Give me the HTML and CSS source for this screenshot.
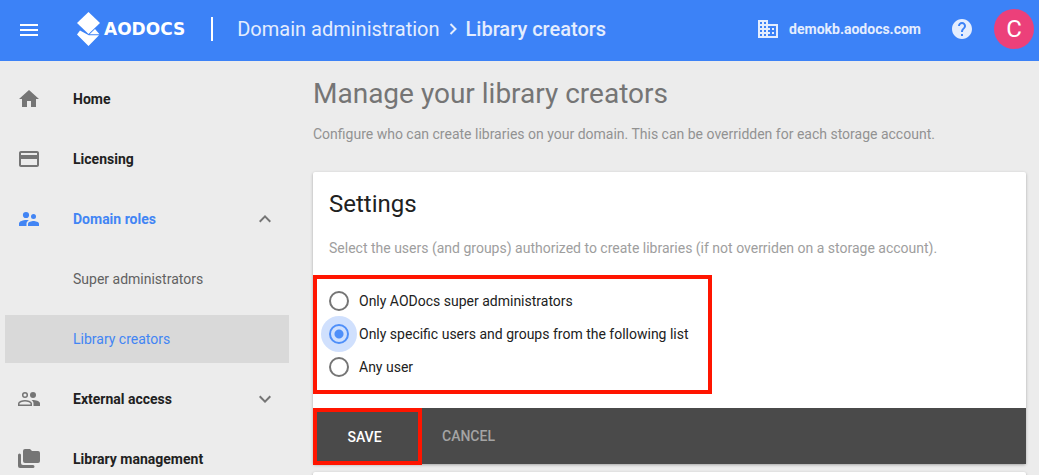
FILE: index.html
```html
<!DOCTYPE html>
<html lang="en">
<head>
<meta charset="utf-8">
<meta name="viewport" content="width=device-width, initial-scale=1">
<title>Library creators - Domain administration</title>
<link rel="stylesheet" href="styles.css">
</head>
<body>
<div class="app">
  <header class="topbar">
    <button class="icon-button menu" type="button" aria-label="Menu">
      <svg class="icon" viewBox="0 0 24 24"><path d="M3 18h18v-2H3v2zm0-5h18v-2H3v2zm0-7v2h18V6H3z"/></svg>
    </button>
    <a class="brand" href="#">
      <svg class="brand-mark" viewBox="0 0 23 34"><path d="M11.500 0L23 11 11.500 22 0 11z"/><path d="M3 18.500L0 22.500 11.500 34 22 23.300H11.800z"/><path d="M18 17L12.600 22.300H22.500z"/></svg>
      <span class="brand-name">AODOCS</span>
    </a>
    <nav class="breadcrumb" aria-label="Breadcrumb">
      <a class="crumb" href="#">Domain administration</a>
      <svg class="crumb-arrow" viewBox="0 0 8 12"><path d="M1.500 1l5 5-5 5"/></svg>
      <a class="crumb current" href="#">Library creators</a>
    </nav>
    <div class="account">
      <a class="domain" href="#">
        <svg class="icon" viewBox="0 0 24 24"><path d="M12 7V3H2v18h20V7H12zM6 19H4v-2h2v2zm0-4H4v-2h2v2zm0-4H4V9h2v2zm0-4H4V5h2v2zm4 12H8v-2h2v2zm0-4H8v-2h2v2zm0-4H8V9h2v2zm0-4H8V5h2v2zm10 12h-8v-2h2v-2h-2v-2h2v-2h-2V9h8v10zm-2-8h-2v2h2v-2zm0 4h-2v2h2v-2z"/></svg>
        <span>demokb.aodocs.com</span>
      </a>
      <button class="icon-button help" type="button" aria-label="Help">
        <svg class="icon" viewBox="0 0 24 24"><path d="M12 2C6.480 2 2 6.480 2 12s4.480 10 10 10 10-4.480 10-10S17.520 2 12 2zm1 17h-2v-2h2v2zm2.070-7.750l-.9.920C13.450 12.900 13 13.500 13 15h-2v-.5c0-1.100.450-2.100 1.170-2.830l1.240-1.260c.370-.360.590-.860.590-1.410 0-1.100-.9-2-2-2s-2 .9-2 2H8c0-2.210 1.790-4 4-4s4 1.790 4 4c0 .880-.360 1.680-.930 2.250z"/></svg>
      </button>
      <button class="avatar" type="button" aria-label="Account">C</button>
    </div>
  </header>

  <div class="body">
    <nav class="sidebar" aria-label="Administration">
      <a class="item" href="#">
        <svg class="icon" viewBox="0 0 24 24"><path d="M10 20v-6h4v6h5v-8h3L12 3 2 12h3v8z"/></svg>
        <span class="label">Home</span>
      </a>
      <a class="item" href="#">
        <svg class="icon" viewBox="0 0 24 24"><path d="M20 4H4c-1.110 0-1.990.890-1.990 2L2 18c0 1.110.890 2 2 2h16c1.110 0 2-.890 2-2V6c0-1.110-.890-2-2-2zm0 14H4v-6h16v6zm0-10H4V6h16v2z"/></svg>
        <span class="label">Licensing</span>
      </a>
      <a class="item open" href="#">
        <svg class="icon" viewBox="0 0 24 24"><circle cx="9" cy="8" r="3.100"/><circle cx="16.500" cy="9.500" r="2.500"/><path d="M16.500 14c-1.830 0-5.500.920-5.500 2.750V19h11v-2.250c0-1.830-3.670-2.750-5.500-2.750z"/><path d="M9 13c-2.330 0-7 1.170-7 3.500V19h7.500v-2.250c0-.850.330-2.340 2.370-3.470C10.500 13.100 9.660 13 9 13z"/></svg>
        <span class="label">Domain roles</span>
        <svg class="chevron" viewBox="0 0 24 24"><path d="M12 8l-6 6 1.410 1.410L12 10.830l4.590 4.580L18 14z"/></svg>
      </a>
      <a class="item sub" href="#"><span class="label">Super administrators</span></a>
      <a class="item sub selected" href="#" aria-current="page"><span class="label">Library creators</span></a>
      <a class="item" href="#">
        <svg class="icon" viewBox="0 0 24 24"><circle class="line" cx="8" cy="8" r="2.300"/><circle cx="16" cy="8" r="3"/><path class="line" d="M1.750 18.250V16.500c0-1.700 3.600-2.750 6.250-2.750s6.250 1.050 6.250 2.750v1.750z"/><path d="M16.500 19v-2.500c0-1.500-.8-2.600-1.900-3.400 3.300-.2 8.400.9 8.400 3.400V19z"/></svg>
        <span class="label">External access</span>
        <svg class="chevron" viewBox="0 0 24 24"><path d="M16.590 8.590L12 13.170 7.410 8.590 6 10l6 6 6-6z"/></svg>
      </a>
      <a class="item" href="#">
        <svg class="icon" viewBox="0 0 24 24"><path d="M8 2h5l2 2h6a2 2 0 0 1 2 2v8a2 2 0 0 1-2 2H8a2 2 0 0 1-2-2V4a2 2 0 0 1 2-2z"/><path d="M1 8a1.500 1.500 0 0 1 3 0v8a2 2 0 0 0 2 2h10a1.500 1.500 0 0 1 0 3H3a2 2 0 0 1-2-2z"/></svg>
        <span class="label">Library management</span>
      </a>
    </nav>

    <main class="content">
      <h1>Manage your library creators</h1>
      <p class="intro">Configure who can create libraries on your domain. This can be overridden for each storage account.</p>
      <form class="card">
        <h2>Settings</h2>
        <p class="hint">Select the users (and groups) authorized to create libraries (if not overriden on a storage account).</p>
        <fieldset class="choices" aria-label="Authorized users">
          <label class="choice"><input type="radio" name="who">Only AODocs super administrators</label>
          <label class="choice"><input type="radio" name="who" checked>Only specific users and groups from the following list</label>
          <label class="choice"><input type="radio" name="who">Any user</label>
        </fieldset>
        <div class="actions">
          <button class="action save" type="button">SAVE</button>
          <button class="action cancel" type="button">CANCEL</button>
        </div>
      </form>
      <section class="card next"></section>
    </main>
  </div>
</div>
</body>
</html>
```
FILE: styles.css
```css
* {
  box-sizing: border-box;
}

body {
  margin: 0;
  background: #ececec;
  color: #212121;
  font: 14px/20px Roboto, "Liberation Sans", sans-serif;
}

a {
  color: inherit;
  text-decoration: none;
}

button {
  padding: 0;
  border: 0;
  background: none;
  color: inherit;
  font: inherit;
  cursor: pointer;
}

.app {
  display: flex;
  flex-direction: column;
  height: 100vh;
  overflow: hidden;
}

.icon,
.chevron {
  display: block;
  flex: none;
  width: 24px;
  height: 24px;
  fill: currentColor;
}

.topbar {
  display: flex;
  flex: none;
  align-items: center;
  height: 61px;
  padding: 0 5px 3px 17px;
  background: #3c82f7;
  color: #fff;
}

.menu {
  padding-top: 2px;
}

.brand {
  display: flex;
  align-items: center;
  gap: 4px;
  margin-left: 36px;
}

.brand-mark {
  width: 23px;
  height: 34px;
  fill: #fff;
}

.brand-name {
  font: bold 17px/20px "DejaVu Sans", sans-serif;
}

.breadcrumb {
  display: flex;
  align-items: center;
  gap: 9px;
  height: 24px;
  margin-left: 26px;
  padding-left: 24px;
  border-left: 2px solid #fff;
  color: #e4edfe;
  font-size: 20px;
  line-height: 24px;
}

.crumb-arrow {
  width: 8px;
  height: 12px;
  fill: none;
  stroke: currentColor;
  stroke-width: 2;
}

.current {
  font-weight: 500;
}

.account {
  display: flex;
  align-items: center;
  margin-left: auto;
  color: #e4edfe;
}

.domain {
  display: flex;
  align-items: center;
  gap: 9px;
  font-weight: 700;
}

.help {
  margin: 0 20px 0 29px;
}

.avatar {
  width: 40px;
  height: 40px;
  border-radius: 50%;
  background: #ec407a;
  color: #fff;
  font-size: 24px;
}

.body {
  display: flex;
  flex: 1;
  min-height: 0;
}

.sidebar {
  display: flex;
  flex: none;
  flex-direction: column;
  gap: 12px;
  width: 289px;
  padding: 14px 0 0 5px;
}

.item {
  display: flex;
  flex: none;
  align-items: center;
  gap: 32px;
  height: 48px;
  padding: 0 12px;
  font-weight: 700;
}

.item .icon,
.chevron {
  color: #757575;
}

.chevron {
  margin-left: auto;
}

.line {
  fill: none;
  stroke: currentColor;
  stroke-width: 1.5;
}

.open,
.item.open .icon {
  color: #4285f4;
}

.sub {
  padding-left: 68px;
  color: #616161;
  font-weight: 400;
}

.selected {
  background: #d9d9d9;
  color: #4285f4;
}

.content {
  flex: 1;
  min-width: 0;
  padding: 17px 13px 0 24px;
}

h1,
h2,
p {
  margin: 0;
}

h1 {
  color: #757575;
  font-size: 28px;
  font-weight: 400;
  line-height: 32px;
}

.intro {
  margin-top: 14px;
  color: #929292;
}

.card {
  margin-top: 28px;
  border-radius: 2px;
  background: #fff;
  box-shadow: 0 1px 3px rgba(0, 0, 0, 0.3);
}

h2 {
  padding: 16px 16px 0;
  font-size: 24px;
  font-weight: 400;
  line-height: 32px;
}

.hint {
  padding: 18px 16px 0;
  color: #9e9e9e;
}

.choices {
  display: flex;
  flex-direction: column;
  gap: 13px;
  width: 56%;
  min-width: 360px;
  margin: 17px 0 14px;
  padding: 12px 12px 13px;
  border: 4px solid #ff1500;
}

.choice {
  display: flex;
  align-items: center;
  gap: 10px;
}

.choice input {
  flex: none;
  width: 20px;
  height: 20px;
  margin: 0;
  border: 2px solid #757575;
  border-radius: 50%;
  appearance: none;
}

.choice input:checked {
  border-color: #4f8ff9;
  background: radial-gradient(circle, #4f8ff9 4px, transparent 5px);
  background-color: #d0e0fd;
  box-shadow: 0 0 0 8px #d0e0fd;
}

.actions {
  display: flex;
  height: 56px;
  background: #4a4a4a;
}

.action {
  font-weight: 500;
}

.save {
  width: 109px;
  height: 57px;
  padding-right: 6px;
  border: 4px solid #ff1500;
  color: #fff;
}

.cancel {
  padding: 0 20px;
  color: #a4a4a4;
}

.next {
  height: 48px;
  margin-top: 8px;
}
```
